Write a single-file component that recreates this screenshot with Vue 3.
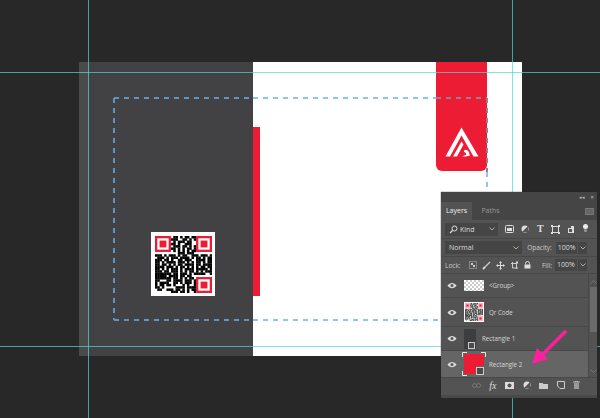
<template>
  <div class="stage">
    <div class="doc">
      <div class="doc-dark"></div>
      <div class="doc-light"></div>
      <div class="red-bar"></div>
      <div class="red-tab">
        <svg class="logo" width="34" height="30" viewBox="0 0 34 30">
          <path d="M0.5 29.500 L16.500 0.500 L33.500 29.500 H28.500 L16.500 8.500 L5 29.500 Z" fill="#fff" />
          <path d="M8 29.500 L16.500 14.500 L18.500 17.500 L12 29.500 Z" fill="#fff" />
          <path d="M19 23.500 C21 22 23 23 24 25.500 L25 28.500 L21 29.500 H17 L21.500 27.500 C21 26 20 25 19 25 Z" fill="#fff" />
        </svg>
      </div>
      <div class="qr">
        <svg width="57" height="57" viewBox="0 0 25 25" shape-rendering="geometricPrecision">
          <template v-for="(row, y) in qrRows" :key="y">
            <template v-for="(c, x) in row" :key="x">
              <rect v-if="c === '#'" :x="x" :y="y" width="1.1" height="1.1" fill="#000" />
            </template>
          </template>
          <g v-for="f in finders" :key="f.x + '-' + f.y">
            <rect :x="f.x + 0.5" :y="f.y + 0.5" width="6" height="6" fill="#fff" stroke="#ed1c35" stroke-width="1" />
            <rect :x="f.x + 2" :y="f.y + 2" width="3" height="3" fill="#ed1c35" />
          </g>
        </svg>
      </div>
      <svg class="safe" width="443" height="294" viewBox="0 0 443 294">
        <path v-for="d in dashes" :key="d.path" :d="d.path" :stroke="d.color" stroke-width="2" stroke-dasharray="5 5" fill="none" />
      </svg>
    </div>

    <div class="guide-v g1"></div>
    <div class="guide-v g2"></div>
    <div class="guide-h g3"></div>
    <div class="guide-h g4"></div>

    <div class="panel">
      <div class="panel-top">
        <span class="collapse">◂◂</span>
        <span class="close">✕</span>
      </div>
      <div class="tabs">
        <span class="tab active">Layers</span>
        <span class="tab">Paths</span>
        <span class="tab-menu"></span>
      </div>
      <div class="row filter-row">
        <div class="select kind">
          <svg width="9" height="9" viewBox="0 0 9 9"><circle cx="5.5" cy="3.5" r="2.5" fill="none" stroke="#ddd" /><path d="M3.5 5.5 L1 8" stroke="#ddd" stroke-width="1.2" /></svg>
          <span>Kind</span>
          <svg class="caret" width="6" height="4" viewBox="0 0 6 4"><path d="M0.5 0.5 L3 3 L5.5 0.5" fill="none" stroke="#aaa" /></svg>
        </div>
        <div class="filters">
          <svg width="9" height="8" viewBox="0 0 9 8"><rect x="0.5" y="0.5" width="8" height="7" rx="1" fill="none" stroke="#ddd" /><rect x="2" y="3" width="5" height="3" fill="#ddd" /></svg>
          <svg width="8" height="8" viewBox="0 0 8 8"><circle cx="4" cy="4" r="3.5" fill="#ddd" /><path d="M4 4 L7 1 V7 H1 Z" fill="#555" /></svg>
          <span class="t-icon">T</span>
          <svg width="9" height="9" viewBox="0 0 9 9"><rect x="1.5" y="1.5" width="6" height="6" fill="none" stroke="#ddd" /><path d="M0 0h2v2H0zM7 0h2v2H7zM0 7h2v2H0zM7 7h2v2H7z" fill="#ddd" /></svg>
          <svg width="8" height="9" viewBox="0 0 8 9"><path d="M1 3 H4 V1 H7 V8 H1 Z" fill="#ddd" /><rect x="2" y="4" width="3" height="3" fill="#555" /></svg>
          <span class="toggle"></span>
        </div>
      </div>
      <div class="row blend-row">
        <div class="select normal">
          <span>Normal</span>
          <svg class="caret" width="6" height="4" viewBox="0 0 6 4"><path d="M0.5 0.5 L3 3 L5.5 0.5" fill="none" stroke="#aaa" /></svg>
        </div>
        <span class="lbl">Opacity:</span>
        <span class="num">100%</span>
        <span class="drop"><svg width="6" height="4" viewBox="0 0 6 4"><path d="M0.5 0.5 L3 3 L5.5 0.5" fill="none" stroke="#aaa" /></svg></span>
      </div>
      <div class="row lock-row">
        <span class="lbl">Lock:</span>
        <div class="locks">
          <svg width="8" height="8" viewBox="0 0 8 8"><rect x="0.5" y="0.5" width="7" height="7" fill="none" stroke="#bbb" stroke-dasharray="1 1" /><rect x="2" y="2" width="2" height="2" fill="#ccc" /><rect x="4" y="4" width="2" height="2" fill="#ccc" /></svg>
          <svg width="9" height="9" viewBox="0 0 9 9"><path d="M8 1 L3 6" stroke="#ccc" stroke-width="1.2" /><path d="M3 6 L1 8" stroke="#ddd" stroke-width="1.8" /></svg>
          <svg width="9" height="9" viewBox="0 0 9 9"><path d="M4.5 0 L6 2 H5 V4 H7 V3 L9 4.500 L7 6 V5 H5 V7 H6 L4.500 9 L3 7 H4 V5 H2 V6 L0 4.500 L2 3 V4 H4 V2 H3 Z" fill="#ddd" /></svg>
          <svg width="9" height="9" viewBox="0 0 9 9"><path d="M1 2.500 H6.500 V8" fill="none" stroke="#ccc" /><path d="M2.500 1 V7 H8" fill="none" stroke="#ccc" /><rect x="6" y="0.500" width="2" height="2" fill="#ddd" /></svg>
          <svg width="7" height="8" viewBox="0 0 7 8"><path d="M1.500 3.500 V2.500 A2 2 0 0 1 5.500 2.500 V3.500" fill="none" stroke="#ddd" /><rect x="0.500" y="3.500" width="6" height="4" fill="#ddd" /></svg>
        </div>
        <span class="lbl fill">Fill:</span>
        <span class="num">100%</span>
        <span class="drop"><svg width="6" height="4" viewBox="0 0 6 4"><path d="M0.5 0.5 L3 3 L5.5 0.5" fill="none" stroke="#aaa" /></svg></span>
      </div>

      <div class="layers">
        <div class="list">
          <div v-for="l in layers" :key="l.name" class="layer" :class="[l.kind, { selected: l.selected }]">
            <svg class="eye" width="10" height="7" viewBox="0 0 10 7">
              <path d="M0.500 3.500 C3 0 7 0 9.500 3.500 C7 7 3 7 0.500 3.500 Z" fill="#ddd" />
              <circle cx="5" cy="3.500" r="1.500" fill="#555" />
            </svg>
            <div class="thumb" :class="'thumb-' + l.kind">
              <svg v-if="l.kind === 'qrlayer'" width="18" height="18" viewBox="0 0 25 25">
                <template v-for="(row, y) in qrRows" :key="y">
                  <template v-for="(c, x) in row" :key="x">
                    <rect v-if="c === '#'" :x="x" :y="y" width="1" height="1" fill="#000" />
                  </template>
                </template>
                <g v-for="f in finders" :key="f.x + '_' + f.y">
                  <rect :x="f.x" :y="f.y" width="7" height="7" fill="#fbb4bc" />
                  <rect :x="f.x + 2" :y="f.y + 2" width="3" height="3" fill="#ed1c35" />
                </g>
              </svg>
              <svg v-if="l.kind === 'rect2'" width="24" height="24" viewBox="0 0 24 24">
                <path d="M2 2 H22 V14 H14 V22 H2 Z" fill="#ed1c35" />
                <path d="M0.500 5 V0.500 H5 M19 0.500 H23.500 V5 M0.500 19 V23.500 H5" fill="none" stroke="#e6e6e6" />
              </svg>
              <span v-if="l.shape" class="shape-badge"></span>
            </div>
            <span class="name">{{ l.name }}</span>
          </div>
        </div>
        <div class="scroll">
          <svg width="7" height="4" viewBox="0 0 7 4"><path d="M0.500 3.500 L3.500 0.500 L6.500 3.500" fill="none" stroke="#777" /></svg>
          <div class="scroll-track"><div class="scroll-thumb"></div></div>
          <svg width="7" height="4" viewBox="0 0 7 4"><path d="M0.500 0.500 L3.500 3.500 L6.500 0.500" fill="none" stroke="#777" /></svg>
        </div>
      </div>

      <div class="footer">
        <svg width="9" height="5" viewBox="0 0 9 5"><rect x="0.500" y="0.500" width="4" height="4" rx="2" fill="none" stroke="#777" /><rect x="4.500" y="0.500" width="4" height="4" rx="2" fill="none" stroke="#777" /></svg>
        <span class="fx">fx</span>
        <svg width="9" height="7" viewBox="0 0 9 7"><rect width="9" height="7" fill="#ddd" /><circle cx="4.500" cy="3.500" r="2" fill="#555" /></svg>
        <svg width="8" height="8" viewBox="0 0 8 8"><circle cx="4" cy="4" r="3.500" fill="#ddd" /><path d="M4 4 L7 1 V7 H1 Z" fill="#555" /></svg>
        <svg width="9" height="7" viewBox="0 0 9 7"><path d="M0 1 H3.500 L4.500 2 H9 V7 H0 Z" fill="#ccc" /></svg>
        <svg width="8" height="8" viewBox="0 0 8 8"><path d="M0.500 0.500 H7.500 V7.500 H3 L0.500 5 Z" fill="none" stroke="#ccc" /></svg>
        <svg width="7" height="8" viewBox="0 0 7 8"><path d="M0 1 H7 M2.500 1 V0 H4.500 V1" stroke="#bbb" fill="none" /><path d="M1 2 H6 V8 H1 Z" fill="#999" /></svg>
      </div>
    </div>

    <svg class="arrow" width="44" height="44" viewBox="0 0 44 44">
      <path d="M37 7 L11 33" stroke="#ff1f9c" stroke-width="3.400" />
      <path d="M3 40 L8 24 L19 35 Z" fill="#ff1f9c" />
    </svg>
  </div>
</template>

<script setup>
const qrRows = [
  '........##.#.##.##.......',
  '.......###..##.#.#.......',
  '........#.###.##.........',
  '.......##.#..###.........',
  '........###.##.#.#.......',
  '.......##.#.#.##.#.......',
  '........#.#.#.#.##.......',
  '..........###.###........',
  '###.#.###.#.##..###.###.#',
  '.###.#.###.####.#.##.#.##',
  '###.##.#..##.###..####.##',
  '##.#.####.###.#.#.##.#.##',
  '##.##.#.#.##.####.##.####',
  '####.###.#.##.#.#.#.##.##',
  '##.#.#.###.#.####.#####.#',
  '###.##.###.#.#.##.#.#.###',
  '#######.##.###.#.#####..#',
  '#####.####.##.##.........',
  '#######.##.#.#.##........',
  '##...##.####.###.#.......',
  '#.####..##.#.###.#.......',
  '#.##.##.#...#.#..#.......',
  '##.#.....####.####.......',
  '.##..###.##.#.#.##.......',
  '.......###.##.#..#.......'
]

const finders = [
  { x: 0, y: 0 },
  { x: 18, y: 0 },
  { x: 18, y: 18 }
]

const layers = [
  { name: '<Group>', kind: 'group' },
  { name: 'Qr Code', kind: 'qrlayer' },
  { name: 'Rectangle 1', kind: 'rect1', shape: true },
  { name: 'Rectangle 2', kind: 'rect2', shape: true, selected: true }
]

// the bleed line changes colour with whatever it passes over
const dashes = [
  { path: 'M35 36 H174', color: '#5f95c2' },
  { path: 'M174 36 H357', color: '#8cc4f2' },
  { path: 'M357 36 H408', color: '#94808e' },
  { path: 'M35 258 H174', color: '#5f95c2' },
  { path: 'M174 258 H408', color: '#8cc4f2' },
  { path: 'M35 36 V258', color: '#5f95c2' },
  { path: 'M408 36 V110', color: '#94808e' },
  { path: 'M408 110 V258', color: '#8cc4f2' }
]
</script>

<style>
body {
  background: #282828;
}
</style>

<style scoped>
.stage {
  position: relative;
  width: 600px;
  height: 418px;
  overflow: hidden;
  background: #282828;
  font-family: "Open Sans", "Liberation Sans", sans-serif;
  font-size: 7px;
  color: #ddd;
}

.doc {
  position: absolute;
  left: 79px;
  top: 62px;
  width: 443px;
  height: 294px;
  display: flex;
}

.doc-dark {
  width: 174px;
  background: linear-gradient(90deg, #4a4a4a 0, #4a4a4a 9px, #424143 10px);
}

.doc-light {
  flex: 1;
  background: #fff;
}

.red-bar {
  position: absolute;
  left: 174px;
  top: 65px;
  width: 7px;
  height: 169px;
  background: #ed1c35;
}

.red-tab {
  position: absolute;
  left: 357px;
  top: 0;
  width: 51px;
  height: 109px;
  background: #ed1c35;
  border-radius: 0 0 6px 6px;
}

.logo {
  position: absolute;
  left: 9px;
  top: 65px;
}

.safe {
  position: absolute;
  left: 0;
  top: 0;
}

.qr {
  position: absolute;
  left: 72px;
  top: 170px;
  width: 64px;
  height: 64px;
  background: #fff;
  display: flex;
  align-items: center;
  justify-content: center;
}

.guide-v,
.guide-h {
  position: absolute;
  background: #4fd8d8;
  opacity: 0.7;
}

.guide-v {
  top: 0;
  width: 1px;
  height: 418px;
}

.guide-h {
  left: 0;
  width: 600px;
  height: 1px;
}

.g1 {
  left: 88px;
}

.g2 {
  left: 512px;
}

.g3 {
  top: 72px;
}

.g4 {
  top: 346px;
}

.panel {
  position: absolute;
  left: 441px;
  top: 192px;
  width: 156px;
  height: 206px;
  background: #535353;
  display: flex;
  flex-direction: column;
  box-shadow: 0 0 1px #222;
}

.panel-top {
  height: 10px;
  background: #454545;
  display: flex;
  justify-content: flex-end;
  align-items: center;
  gap: 5px;
  padding-right: 3px;
  font-size: 5px;
  color: #bbb;
}

.tabs {
  height: 18px;
  background: #454545;
  display: flex;
  align-items: center;
  position: relative;
}

.tab {
  height: 18px;
  line-height: 18px;
  width: 31px;
  box-sizing: border-box;
  color: #999;
  text-align: center;
}

.tab + .tab {
  margin-left: 5px;
  width: 27px;
}

.tab.active {
  background: #535353;
  color: #eee;
}

.tab-menu {
  position: absolute;
  right: 3px;
  top: 6px;
  width: 7px;
  height: 5px;
  border: 1px solid #777;
  background: #666;
}

.row {
  display: flex;
  align-items: center;
  padding: 0 10px 0 4px;
  box-sizing: border-box;
  border-bottom: 1px solid #484848;
}

.filter-row {
  height: 19px;
  gap: 7px;
  padding-right: 4px;
}

.blend-row {
  height: 18px;
  gap: 4px;
}

.lock-row {
  height: 17px;
  gap: 3px;
}

.select {
  height: 13px;
  background: #454545;
  display: flex;
  align-items: center;
  gap: 2px;
  padding: 0 3px 0 4px;
  box-sizing: border-box;
}

.kind {
  width: 53px;
}

.normal {
  width: 79px;
  margin-right: 1px;
}

.caret {
  margin-left: auto;
}

.filters {
  flex: 1;
  display: flex;
  align-items: center;
  justify-content: space-between;
  padding-right: 5px;
}

.t-icon {
  font-family: "Liberation Serif", serif;
  font-weight: 700;
  font-size: 10px;
  line-height: 10px;
}

.toggle {
  width: 5px;
  height: 5px;
  border-radius: 50%;
  background: #eee;
  box-shadow: 0 4px 0 -1px #999;
  margin-top: -5px;
}

.lbl {
  color: #ccc;
  font-size: 6.5px;
}

.num {
  width: 22px;
  height: 12px;
  line-height: 12px;
  background: #454545;
  text-align: center;
}

.blend-row .num {
  margin-left: auto;
}

.drop {
  width: 9px;
  height: 12px;
  background: #454545;
  display: flex;
  align-items: center;
  justify-content: center;
  margin-left: -3px;
}

.lock-row .drop {
  margin-left: -2px;
}

.locks {
  display: flex;
  align-items: center;
  gap: 5px;
  margin-left: 5px;
}

.fill {
  margin-left: auto;
}

.layers {
  flex: 1;
  display: flex;
  min-height: 0;
}

.list {
  flex: 1;
  display: flex;
  flex-direction: column;
}

.layer {
  display: flex;
  align-items: center;
  border-bottom: 1px solid #484848;
  box-sizing: border-box;
  padding-left: 6px;
  position: relative;
}

.group {
  height: 24px;
}

.qrlayer {
  height: 29px;
}

.rect1 {
  height: 24px;
}

.rect2 {
  height: 26px;
  border-bottom: 0;
}

.layer.selected {
  background: #656565;
}

.eye {
  flex: none;
}

.thumb {
  margin-left: 7px;
  position: relative;
  flex: none;
}

.thumb-group {
  width: 20px;
  height: 11px;
  background: repeating-conic-gradient(#ccc 0 25%, #fff 0 50%) 0 0 / 4px 4px;
}

.thumb-qrlayer {
  width: 20px;
  height: 20px;
  background: #fff;
  display: flex;
  align-items: center;
  justify-content: center;
}

.thumb-rect1 {
  width: 12px;
  height: 20px;
  background: #3d3d3f;
}

.thumb-rect2 {
  width: 24px;
  height: 24px;
  margin-left: 5px;
}

.thumb-rect2 svg {
  display: block;
}

.shape-badge {
  position: absolute;
  right: 1px;
  bottom: 0;
  width: 5px;
  height: 5px;
  border: 1px solid #ccc;
  background: #4b4b4b;
}

.thumb-rect2 .shape-badge {
  right: 2px;
  bottom: 1px;
  width: 6px;
  height: 6px;
}

.name {
  margin-left: 5px;
  font-size: 6.2px;
  color: #d6d6d6;
}

.rect1 .name {
  margin-left: 6px;
}

.rect2 .name {
  margin-left: 3px;
}

.scroll {
  width: 9px;
  display: flex;
  flex-direction: column;
  align-items: center;
  padding: 6px 0 4px;
  gap: 3px;
  box-sizing: border-box;
  border-left: 1px solid #484848;
}

.scroll-track {
  flex: 1;
  width: 7px;
}

.scroll-thumb {
  width: 7px;
  height: 45px;
  background: #6a6a6a;
}

.footer {
  height: 21px;
  display: flex;
  align-items: center;
  justify-content: flex-end;
  gap: 8.5px;
  padding: 0 17px 3px 0;
  box-sizing: border-box;
  background: #535353;
  border-top: 1px solid #484848;
  border-bottom: 3px solid #4a4a4a;
}

.fx {
  font-family: "Liberation Serif", serif;
  font-style: italic;
  font-size: 10px;
  color: #ddd;
}

.arrow {
  position: absolute;
  left: 529px;
  top: 324px;
}
</style>
